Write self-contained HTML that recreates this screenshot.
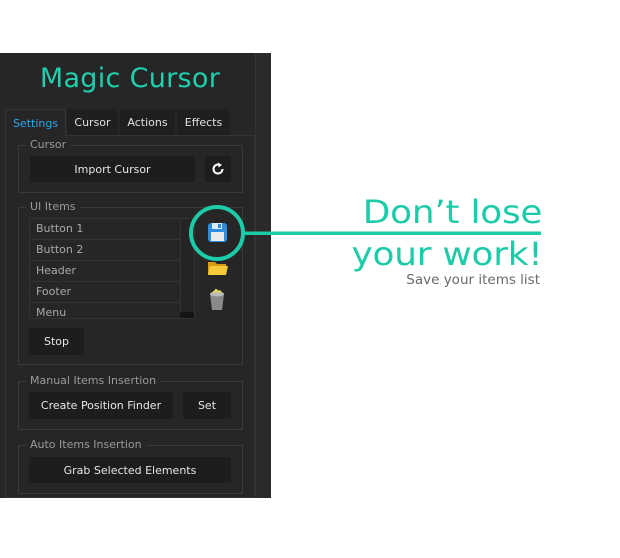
<!DOCTYPE html>
<html><head><style>
*{margin:0;padding:0;box-sizing:border-box}
body{width:620px;height:558px;background:#fff;position:relative;overflow:hidden;font-family:"DejaVu Sans","Liberation Sans",sans-serif}
.a{position:absolute}
#panel{left:0;top:53px;width:271px;height:445px;background:#262626}
.t{color:#c8c8c8;font-size:11px}
.btn{position:absolute;background:#1d1d1d;color:#e6e6e6;font-size:11px;display:flex;align-items:center;justify-content:center}
.grp{position:absolute;border:1px solid #3a3a3a}
.lbl{position:absolute;background:#262626;color:#9a9a9a;font-size:11px;padding:0 4px;top:-8px;left:7px;line-height:14px}
.row{position:absolute;left:0;width:150px;height:21px;border-bottom:1px solid #333;color:#aaa;font-size:11px;padding-left:6px;line-height:20px}
.big{position:absolute;right:78px;color:#1dcba8;font-family:"DejaVu Sans","Liberation Sans",sans-serif;font-size:32px;letter-spacing:-0.2px;line-height:1;transform:scaleX(1.12);transform-origin:right top;white-space:nowrap}
</style></head><body>
<div id="panel" class="a">
 <div class="a" style="left:255px;top:0;width:16px;height:445px;background:#2a2a2a;border-left:1px solid #333"></div>
 <div class="a" style="left:0;top:10px;width:260px;text-align:center;color:#1fcfae;font-size:27px;letter-spacing:0.3px">Magic Cursor</div>
 <div class="a" style="left:5px;top:82px;width:250px;height:363px;border:1px solid #333"></div>
 <div class="a" style="left:5px;top:56px;width:61px;height:28px;background:#262626;border:1px solid #333;border-bottom:none;color:#2fa6f0;font-size:11px;text-align:center;line-height:28px">Settings</div>
 <div class="a t" style="left:67px;top:56px;width:51px;height:26px;background:#1f1f1f;text-align:center;line-height:28px;color:#e0e0e0">Cursor</div>
 <div class="a t" style="left:120px;top:56px;width:55px;height:26px;background:#1f1f1f;text-align:center;line-height:28px;color:#e0e0e0">Actions</div>
 <div class="a t" style="left:177px;top:56px;width:53px;height:26px;background:#1f1f1f;text-align:center;line-height:28px;color:#e0e0e0">Effects</div>

 <div class="grp" style="left:18px;top:92px;width:225px;height:48px"><div class="lbl">Cursor</div></div>
 <div class="btn" style="left:30px;top:103px;width:165px;height:26px">Import Cursor</div>
 <div class="btn" style="left:205px;top:103px;width:26px;height:26px"><svg width="14" height="14" viewBox="0 0 14 14"><path d="M11.5 7A4.5 4.5 0 1 1 8.5 2.8" fill="none" stroke="#fff" stroke-width="2"/><path d="M7 0.5L11 3L7.5 5.5Z" fill="#fff"/></svg></div>

 <div class="grp" style="left:18px;top:154px;width:225px;height:158px"><div class="lbl">UI Items</div></div>
 <div class="a" style="left:29px;top:165px;width:166px;height:101px;border:1px solid #333;overflow:hidden">
  <div class="row" style="top:0">Button 1</div>
  <div class="row" style="top:21px">Button 2</div>
  <div class="row" style="top:42px">Header</div>
  <div class="row" style="top:63px">Footer</div>
  <div class="row" style="top:84px;border:none">Menu</div>
  <div class="a" style="left:150px;top:0;width:15px;height:100px;border-left:1px solid #333;background:#242424"></div>
  <div class="a" style="left:150px;top:93px;width:15px;height:7px;background:#151515"></div>
 </div>
 <div class="btn" style="left:29px;top:275px;width:55px;height:27px">Stop</div>

 <div class="grp" style="left:18px;top:328px;width:225px;height:49px"><div class="lbl">Manual Items Insertion</div></div>
 <div class="btn" style="left:29px;top:339px;width:144px;height:27px">Create Position Finder</div>
 <div class="btn" style="left:183px;top:339px;width:48px;height:27px">Set</div>

 <div class="grp" style="left:18px;top:392px;width:225px;height:49px"><div class="lbl">Auto Items Insertion</div></div>
 <div class="btn" style="left:29px;top:404px;width:202px;height:26px">Grab Selected Elements</div>
</div>

<svg class="a" style="left:0;top:0" width="620" height="558">
 <circle cx="217" cy="233" r="26" fill="none" stroke="#1dcba8" stroke-width="4"/>
 <rect x="243" y="231.5" width="298" height="3.5" fill="#1dcba8"/>
 <rect x="208" y="223" width="19" height="19" rx="3" fill="#2e8fe0"/>
 <rect x="212" y="223" width="10" height="6" fill="#d8ecfb"/>
 <rect x="218" y="224" width="3" height="4" fill="#2e8fe0"/>
 <rect x="211" y="232" width="13" height="9" fill="#eaeaea"/>
 <path d="M208 262h7l2 2h9v10h-18z" fill="#d89c10"/>
 <path d="M210 266h18l-2 9h-18z" fill="#f6c93c"/>
 <path d="M210 294h14l-2 16h-10z" fill="#8a8a8a"/>
 <ellipse cx="217" cy="294" rx="7" ry="2.5" fill="#bbb"/>
 <path d="M213 293l3-3 3 2 2-1" stroke="#e8dd60" stroke-width="2" fill="none"/>
</svg>

<div class="big" style="top:196px">Don’t lose</div>
<div class="big" style="top:238px">your work!</div>
<div class="a" style="right:80px;top:272px;color:#6a6a6a;font-size:13.5px">Save your items list</div>
</body></html>
